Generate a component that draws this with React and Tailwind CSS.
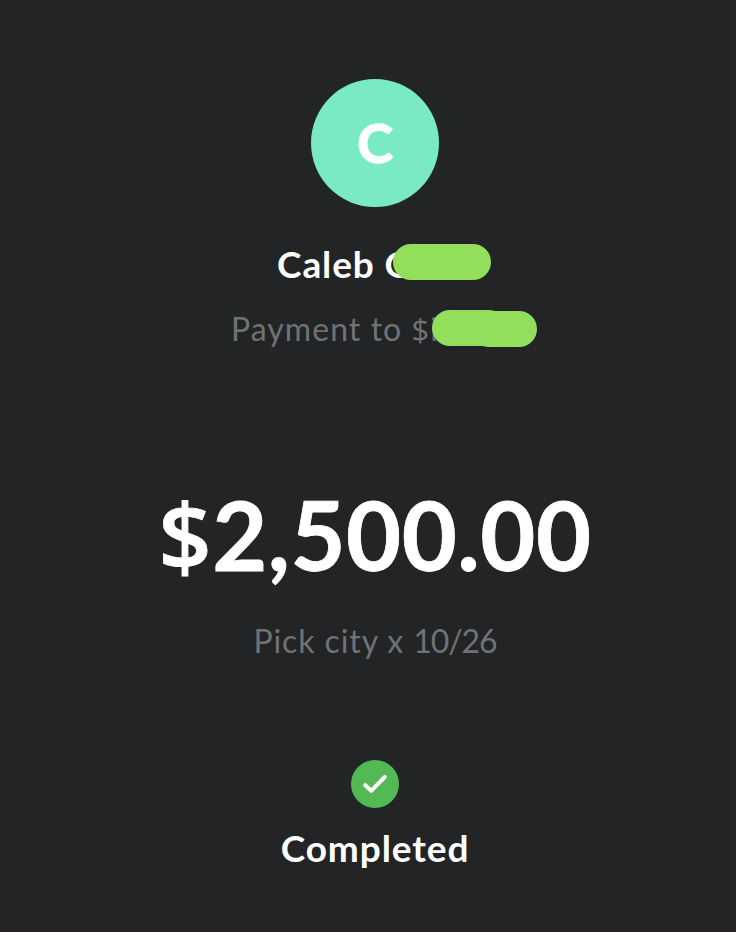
const payment = {
    name: 'Caleb G',
    initial: 'C',
    account: 'Payment to ',
    tag: 'i',
    amount: '2,500.00',
    note: 'Pick city x ',
    date: '10/26',
    status: 'Completed'
};

function Avatar({ initial }) {
    return (
        <div className="w-32 h-32 rounded-full bg-[#7aeac5] flex items-center justify-center">
            <span className="text-[54px] leading-none font-bold [-webkit-text-stroke:1.5px_#fff]">{initial}</span>
        </div>
    );
}

function StatusIcon() {
    return (
        <svg className="w-12 h-12" viewBox="0 0 48 48" fill="none">
            <circle cx="24" cy="24" r="24" fill="#53b955" />
            <path d="M14.3 25.2 L20.2 30.8 L33.7 17" stroke="#fff" strokeWidth="4" strokeLinecap="round" strokeLinejoin="round" />
        </svg>
    );
}

export default function App() {
    return (
        <main className="w-full h-[932px] overflow-hidden bg-[#232426] border-b-2 border-[#262125] pt-[79px] pl-[14px] flex flex-col items-center text-white font-['Lato',sans-serif]">
            <Avatar initial={payment.initial} />

            {/* Recipient, with the surname hidden */}
            <div className="relative w-[196px] mt-[33px]">
                <h1 className="text-[37px] leading-[48px] font-bold tracking-[0.9px] whitespace-nowrap">{payment.name}</h1>
                <div className="absolute left-[116px] top-[3.5px] w-[98px] h-[36px] rounded-full bg-[#93de5a]" />
            </div>

            {/* Account tag, also hidden */}
            <div className="relative w-[288px] mt-[17px]">
                <p className="h-12 text-[32px] leading-[48px] text-[#717275] tracking-[1.05px] whitespace-nowrap">
                    {payment.account}
                    <span className="font-['Open_Sans',sans-serif] text-[31px] leading-none">$</span>
                    {payment.tag}
                </p>
                <div className="absolute left-[201px] top-[4.5px] w-[74px] h-[36px] rounded-full bg-[#93de5a]" />
                <div className="absolute left-[240px] top-[6px] w-[66px] h-[36px] rounded-full bg-[#93de5a]" />
            </div>

            <div className="mt-[116px] h-[130px] flex items-baseline text-[95px] leading-[130px] font-bold tracking-[0.5px] whitespace-nowrap [-webkit-text-stroke:0.8px_#fff]">
                <span className="font-['Open_Sans',sans-serif] font-semibold text-[93px]">$</span>
                <span>{payment.amount}</span>
            </div>
            <p className="mt-[18px] text-[32px] leading-[48px] text-[#717275] tracking-[0.9px] whitespace-pre">
                {payment.note}
                <span className="tracking-[-1.1px]">{payment.date}</span>
            </p>

            {/* Status */}
            <div className="mt-[95px] flex flex-col items-center">
                <StatusIcon />
                <span className="mt-[16px] text-[37px] leading-[48px] font-bold tracking-[0.9px]">{payment.status}</span>
            </div>
        </main>
    );
}
